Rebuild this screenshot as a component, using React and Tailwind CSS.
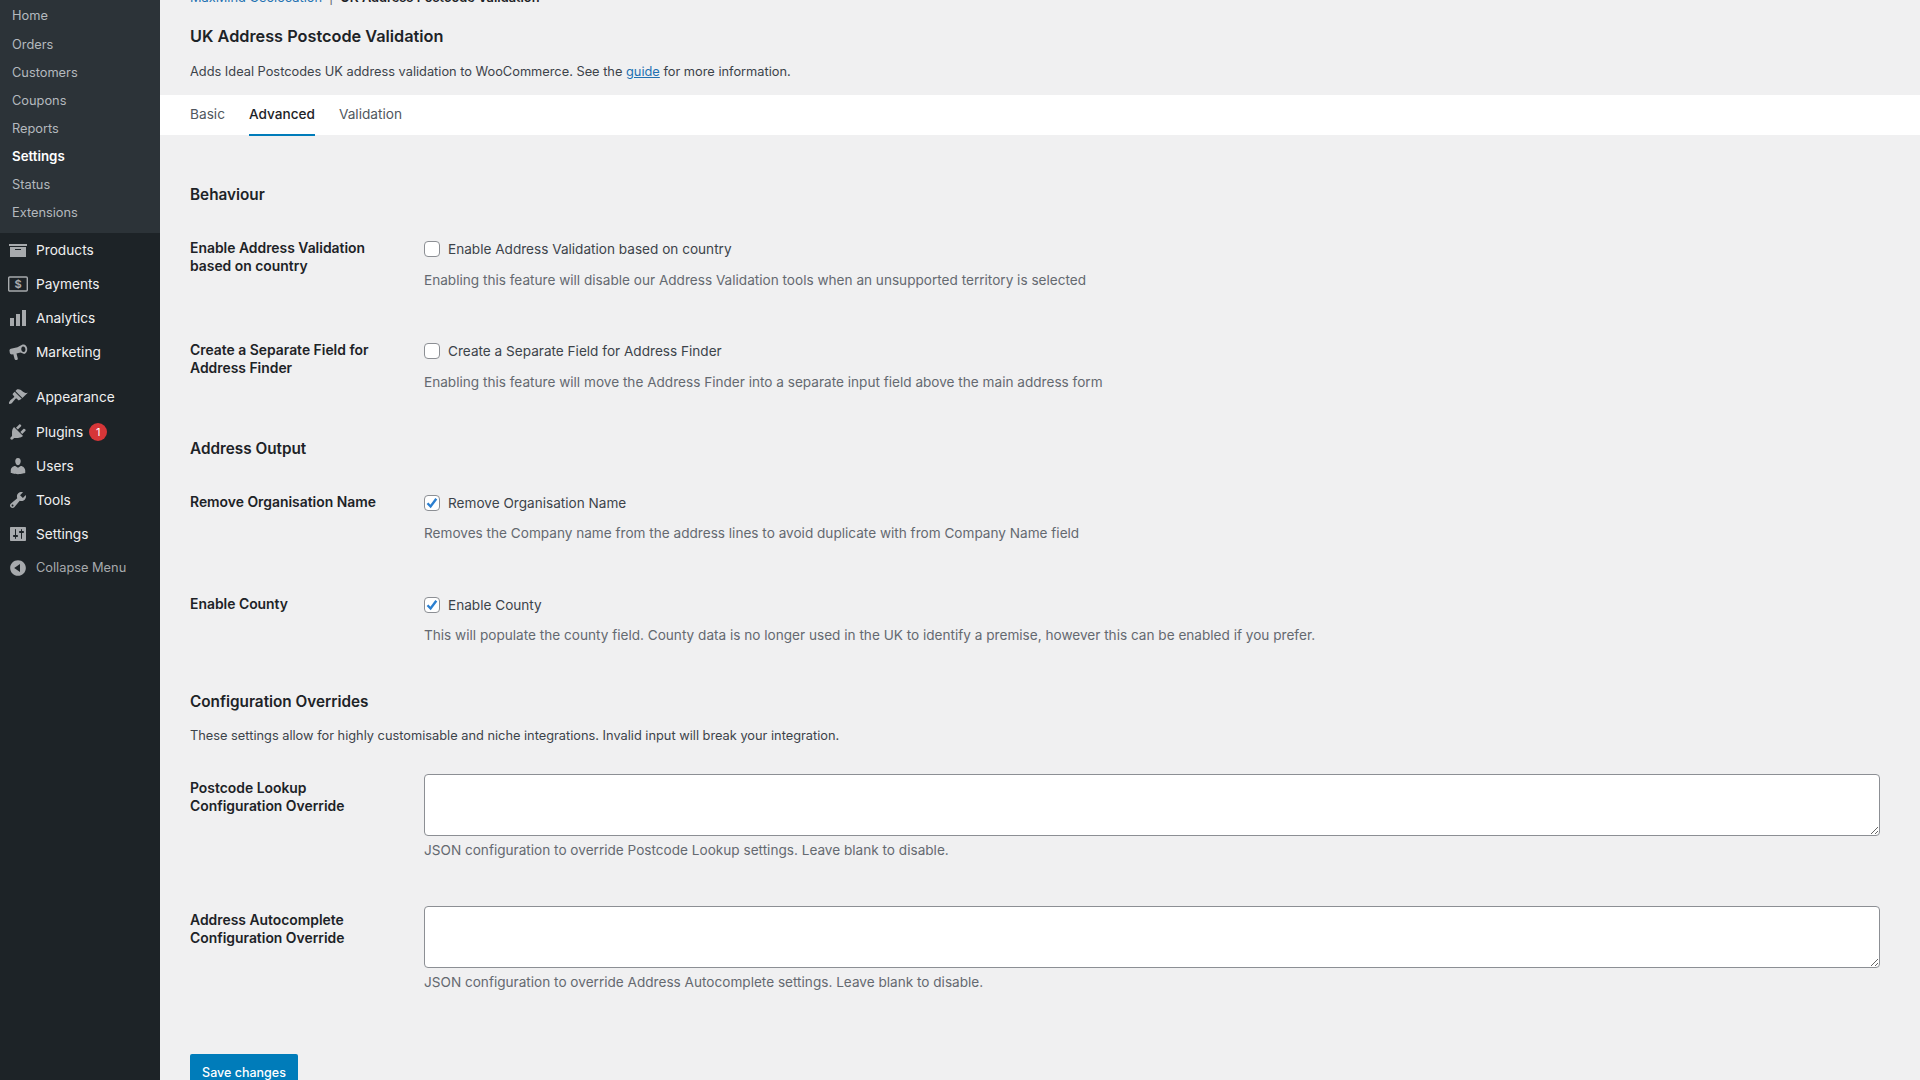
const subMenu = ["Home", "Orders", "Customers", "Coupons", "Reports", "Settings", "Status", "Extensions"];

function Dash({ d }) {
  return (
    <svg viewBox="0 0 20 20" className="w-5 h-5 shrink-0 fill-[#a7aaad]">
      <path d={d} />
    </svg>
  );
}

const icons = {
  products: <Dash d="M19 4v2H1V4h18zM2 7h16v10H2V7zm11 3V9H7v1h6z" />,
  payments: (
    <svg viewBox="0 0 20 20" className="w-5 h-5 shrink-0">
      <rect x="0.700" y="3" width="18.600" height="14" rx="1" fill="none" stroke="#a7aaad" strokeWidth="1.400" />
      <text x="10" y="14.300" textAnchor="middle" fontSize="11" fontWeight="700" fill="#a7aaad" fontFamily="Inter, sans-serif">$</text>
    </svg>
  ),
  analytics: (
    <svg viewBox="0 0 20 20" className="w-5 h-5 shrink-0 fill-[#a7aaad]">
      <rect x="2" y="10" width="4" height="8" />
      <rect x="8" y="6" width="4" height="12" />
      <rect x="14" y="2" width="4" height="16" />
    </svg>
  ),
  marketing: <Dash d="M14.600 2.600c2.300-.7 4.300 1.200 4.600 4 .3 2.800-1 5-3 5.400L12.500 10.500 8.500 11.500 9.800 16.500C9.900 17.200 9.500 17.800 8.800 18H7.800C7.200 18 6.800 17.700 6.600 17.100L5.300 12.200 3.800 12.500C2.800 12.500 2 11.800 1.800 10.800L1.500 8.800C1.400 7.800 2 7 2.900 6.800L9.500 5.200zM15 4.500C13.800 4.700 13.100 6 13.300 7.500 13.500 9 14.600 10.100 15.800 9.900 17 9.700 17.600 8.400 17.400 6.900 17.200 5.400 16.200 4.300 15 4.500z" />,
  appearance: <Dash d="M14.480 11.060L7.410 3.990l1.500-1.500c.5-.56 2.300-.47 3.510.32 1.210.8 1.430 1.280 2.910 2.100 1.180.64 2.450 1.260 4.450.85zm-.71.71L6.700 4.700 4.930 6.470c-.39.39-.39 1.020 0 1.410l1.060 1.060c.39.39.39 1.030 0 1.420-.6.6-3.620 2.990-3.940 3.310-.67.67-1.640 2.290-.84 3.040.8.750 2.370-.23 3.040-.9.320-.32 2.710-3.340 3.310-3.940.39-.39 1.030-.39 1.420 0l1.060 1.060c.39.39 1.020.39 1.410 0z" />,
  plugins: <Dash d="M13.110 4.360L9.870 7.600 8 5.730l3.240-3.240c.35-.34 1.050-.2 1.560.32.52.51.66 1.210.31 1.550zm-8 1.770l.91-1.120 9.010 9.010-1.190.84c-.71.71-2.630 1.160-3.820 1.160H6.140L4.900 17.260c-.59.59-1.540.59-2.120 0-.59-.58-.59-1.530 0-2.120l1.240-1.240v-3.880c0-1.130.4-3.190 1.090-3.890zm7.260 3.970l3.240-3.240c.34-.35 1.040-.21 1.550.31.52.51.66 1.210.31 1.550l-3.240 3.250z" />,
  users: <Dash d="M10 9.250c-2.270 0-2.730-3.440-2.730-3.440C7 4.020 7.820 2 9.970 2c2.160 0 2.980 2.020 2.710 3.810 0 0-.41 3.440-2.680 3.440zm0 2.570L12.720 10c2.390 0 4.520 2.330 4.520 4.530v2.490s-3.650 1.130-7.240 1.130c-3.650 0-7.240-1.130-7.240-1.130v-2.490c0-2.250 1.940-4.480 4.470-4.480z" />,
  tools: <Dash d="M16.680 9.770c-1.340 1.340-3.300 1.670-4.950.99l-5.410 6.520c-.99.99-2.590.99-3.580 0s-.99-2.590 0-3.570l6.520-5.420c-.68-1.650-.35-3.610.99-4.950 1.280-1.280 3.120-1.620 4.720-1.060l-2.890 2.890 2.820 2.820 2.860-2.870c.53 1.580.18 3.390-1.080 4.650zM3.810 16.210c.4.39 1.040.39 1.430 0 .4-.4.4-1.040 0-1.430-.39-.4-1.030-.4-1.430 0-.39.39-.39 1.030 0 1.430z" />,
  settings: <Dash d="M18 16V4c0-.55-.45-1-1-1H3c-.55 0-1 .45-1 1v12c0 .55.45 1 1 1h14c.55 0 1-.45 1-1zM8 11h1c.55 0 1 .45 1 1s-.45 1-1 1H8v1.500c0 .28-.22.5-.5.5s-.5-.22-.5-.5V13H6c-.55 0-1-.45-1-1s.45-1 1-1h1V5.500c0-.28.22-.5.5-.5s.5.22.5.5V11zm5-2h-1c-.55 0-1-.45-1-1s.45-1 1-1h1V5.500c0-.28.22-.5.5-.5s.5.22.5.5V7h1c.55 0 1 .45 1 1s-.45 1-1 1h-1v5.500c0 .28-.22.5-.5.5s-.5-.22-.5-.5V9z" />,
  collapse: <Dash d="M10 2.160c4.330 0 7.840 3.510 7.840 7.840s-3.510 7.840-7.840 7.840S2.160 14.330 2.160 10 5.670 2.160 10 2.160zm2 11.720V6.120L6.180 9.880z" />,
};

function NavItem({ icon, label, badge, className = "text-[#f0f0f1] text-[13.700px]" }) {
  return (
    <div className={`h-[34px] flex items-center pl-2 gap-2 ${className}`}>
      {icons[icon]}
      <span>{label}</span>
      {badge && (
        <span className="-ml-[2px] w-[18px] h-[18px] rounded-full bg-[#d63638] text-white text-[11px] flex items-center justify-center">
          {badge}
        </span>
      )}
    </div>
  );
}

function Sidebar() {
  return (
    <aside className="w-40 shrink-0 bg-[#1d2327] text-[12.800px]">
      <div className="bg-[#2c3338] h-[233px] pt-[2px]">
        {subMenu.map((s) => (
          <div
            key={s}
            className={`h-[28.100px] flex items-center pl-3 ${s === "Settings" ? "font-semibold text-[13.300px] text-white" : "text-[#b4b9be]"}`}
          >
            {s}
          </div>
        ))}
      </div>
      <div>
        <NavItem icon="products" label="Products" />
        <NavItem icon="payments" label="Payments" />
        <NavItem icon="analytics" label="Analytics" />
        <NavItem icon="marketing" label="Marketing" />
        <div className="h-[11px]" />
        <div className="mb-px">
          <NavItem icon="appearance" label="Appearance" />
        </div>
        <NavItem icon="plugins" label="Plugins" badge="1" />
        <NavItem icon="users" label="Users" />
        <NavItem icon="tools" label="Tools" />
        <NavItem icon="settings" label="Settings" />
        <NavItem icon="collapse" label="Collapse Menu" className="text-[#a7aaad] text-[12.800px]" />
      </div>
    </aside>
  );
}

function Check({ checked, label }) {
  return (
    <label className="h-5 flex items-center gap-2 text-[13.600px] text-[#3c434a]">
      <span className="relative w-4 h-4 shrink-0 -mt-px">
        <input
          type="checkbox"
          readOnly
          checked={checked}
          className="appearance-none block w-4 h-4 bg-white border border-[#8c8f94] rounded-[4px]"
        />
        {checked && (
          <svg viewBox="0 0 16 16" className="absolute inset-0 w-4 h-4 fill-none stroke-[#2b7fd0] stroke-[2.400]">
            <path d="M3.500 8.200L6.600 11.500 12.300 3.800" />
          </svg>
        )}
      </span>
      {label}
    </label>
  );
}

function Label({ children }) {
  return <div className="text-[13.900px] font-semibold leading-[18px] text-[#1d2327] w-[190px]">{children}</div>;
}

function CheckRow({ title, label, desc, checked, descGap = "mt-[11px]" }) {
  return (
    <div className="grid grid-cols-[234px_1fr]">
      <Label>{title}</Label>
      <div>
        <Check label={label} checked={checked} />
        <p className={`${descGap} text-[13.600px] leading-5 text-[#646970]`}>{desc}</p>
      </div>
    </div>
  );
}

function AreaRow({ title, desc }) {
  return (
    <div className="grid grid-cols-[234px_1fr]">
      <div className="pt-[5px]">
        <Label>{title}</Label>
      </div>
      <div>
        <textarea className="block w-full h-[62px] bg-white border border-[#8c8f94] rounded-[4px]" />
        <p className="mt-1 text-[13.600px] leading-5 text-[#646970]">{desc}</p>
      </div>
    </div>
  );
}

function Heading({ children, className = "" }) {
  return <h2 className={`text-[15.300px] leading-6 font-semibold text-[#1d2327] ${className}`}>{children}</h2>;
}

export default function App() {
  return (
    <div className="h-screen flex overflow-hidden bg-[#f0f0f1] text-[12.800px] font-['Inter',sans-serif]">
      <Sidebar />
      <main className="flex-1 -mt-3 pl-[30px] pr-10">
        <div className="leading-5 h-5 whitespace-nowrap">
          <a className="text-[#2271b1]">MaxMind Geolocation</a>
          <span className="text-[#646970] mx-[7px]">|</span>
          <span className="font-semibold text-[#1d2327]">UK Address Postcode Validation</span>
        </div>
        <h1 className="mt-4 text-[16.300px] leading-6 font-semibold text-[#1d2327]">UK Address Postcode Validation</h1>
        <p className="mt-[14px] leading-5 text-[#3c434a]">
          Adds Ideal Postcodes UK address validation to WooCommerce. See the{" "}
          <a className="text-[#2271b1] underline">guide</a> for more information.
        </p>

        <nav className="mt-[13px] -ml-[30px] -mr-10 h-10 bg-white pl-[30px] flex gap-6 text-[13.700px] text-[#50575e]">
          <span className="h-[39px] flex items-center">Basic</span>
          <span className="h-[41px] flex items-center text-[#1d2327] text-[13.600px] font-medium border-b-2 border-[#007cba]">Advanced</span>
          <span className="h-[39px] flex items-center">Validation</span>
        </nav>

        <Heading className="mt-[48px] mb-[32px]">Behaviour</Heading>
        <div className="flex flex-col gap-[51px]">
          <CheckRow
            title="Enable Address Validation based on country"
            label="Enable Address Validation based on country"
            desc="Enabling this feature will disable our Address Validation tools when an unsupported territory is selected"
          />
          <CheckRow
            title="Create a Separate Field for Address Finder"
            label="Create a Separate Field for Address Finder"
            desc="Enabling this feature will move the Address Finder into a separate input field above the main address form"
          />
        </div>

        <Heading className="mt-[45px] mb-[32px]">Address Output</Heading>
        <div className="flex flex-col gap-[52px]">
          <CheckRow
            checked
            descGap="mt-[10px]"
            title="Remove Organisation Name"
            label="Remove Organisation Name"
            desc="Removes the Company name from the address lines to avoid duplicate with from Company Name field"
          />
          <CheckRow
            checked
            descGap="mt-[10px]"
            title="Enable County"
            label="Enable County"
            desc="This will populate the county field. County data is no longer used in the UK to identify a premise, however this can be enabled if you prefer."
          />
        </div>

        <Heading className="mt-[45px]">Configuration Overrides</Heading>
        <p className="mt-[12px] leading-5 text-[#3c434a]">
          These settings allow for highly customisable and niche integrations. Invalid input will break your integration.
        </p>

        <div className="mt-7 flex flex-col gap-[46px]">
          <AreaRow
            title="Postcode Lookup Configuration Override"
            desc="JSON configuration to override Postcode Lookup settings. Leave blank to disable."
          />
          <AreaRow
            title="Address Autocomplete Configuration Override"
            desc="JSON configuration to override Address Autocomplete settings. Leave blank to disable."
          />
        </div>

        <button className="mt-[62px] h-[38px] w-[108px] bg-[#007cba] text-white text-[12.500px] font-medium rounded-[2px]">Save changes</button>
      </main>
    </div>
  );
}
